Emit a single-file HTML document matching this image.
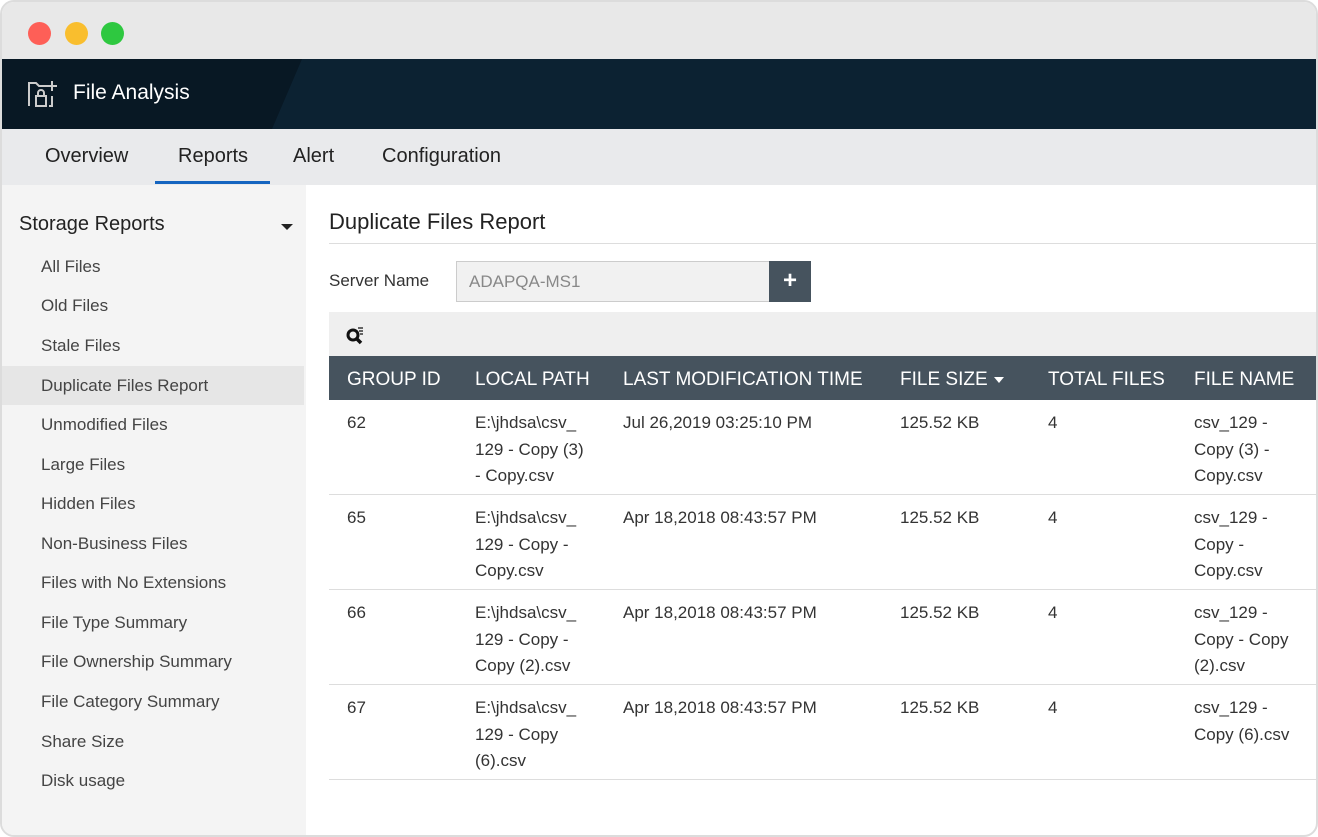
<!DOCTYPE html>
<html><head><style>
*{margin:0;padding:0;box-sizing:border-box}
body{width:1318px;height:837px;background:#fff;font-family:"Liberation Sans",sans-serif;overflow:hidden;position:relative}
.win{position:absolute;left:0;top:0;width:1318px;height:837px;border:2px solid #dcdcdc;border-radius:14px;overflow:hidden;background:#fff}
.tb{position:absolute;left:0;top:0;right:0;height:57px;background:#e8e8e8}
.dot{position:absolute;top:20px;width:23px;height:23px;border-radius:50%}
.hd{position:absolute;left:0;top:57px;right:0;height:70px;background:#0c2232}
.hd .l{position:absolute;left:0;top:0;width:300px;height:70px;background:#081824;clip-path:polygon(0 0,100% 0,270px 100%,0 100%)}
.hd .t{position:absolute;left:71px;top:22px;color:#fff;font-size:21px}
.nav{position:absolute;left:0;top:127px;right:0;height:56px;background:#e9eaec}
.nav span{position:absolute;top:16px;font-size:20px;color:#222}
.side{position:absolute;left:0;top:183px;width:304px;bottom:0;background:#f4f4f4}
.side .h{position:absolute;left:17px;top:28px;font-size:20px;color:#222}
.side .i{position:absolute;left:39px;font-size:17px;color:#444}
.sel{position:absolute;left:0;width:302px;height:39px;background:#e6e6e6}
.c{position:absolute;font-size:17px;color:#333}
.th{position:absolute;top:13px;color:#fff;font-size:19px}
.row{position:absolute;left:327px;right:0;height:95px;border-bottom:1px solid #ddd}
.row div{position:absolute;top:10px;font-size:17px;color:#333;line-height:26.5px}
</style></head><body><div class="win">
<div class="tb"><div class="dot" style="left:26px;background:#fe5f57"></div><div class="dot" style="left:63px;background:#f9be2e"></div><div class="dot" style="left:99px;background:#2ec840"></div></div>
<div class="hd"><div class="l"></div>
<svg style="position:absolute;left:25px;top:20px" width="32" height="30" viewBox="0 0 32 30" fill="none" stroke="#ccc" stroke-width="2"><path d="M2 24V4h7l3 3h8"/><path d="M2 27v-3M22 27h3v-10"/><rect x="9" y="17" width="10" height="10"/><path d="M11 17v-3a3 3 0 0 1 6 0v3"/><path d="M25 2v10M20 7h10"/></svg>
<div class="t">File Analysis</div></div>
<div class="nav"><span style="left:43px">Overview</span><span style="left:176px">Reports</span><span style="left:291px">Alert</span><span style="left:380px">Configuration</span>
<div style="position:absolute;left:153px;top:52px;width:115px;height:3px;background:#1565c0"></div></div>
<div class="side"><div class="h">Storage Reports</div>
<div style="position:absolute;left:279px;top:39px;border:6px solid transparent;border-top:6px solid #222"></div>
<div class="sel" style="top:181px"></div>
<div class="i" style="top:72px">All Files</div><div class="i" style="top:111px">Old Files</div><div class="i" style="top:151px">Stale Files</div><div class="i" style="top:191px">Duplicate Files Report</div><div class="i" style="top:230px">Unmodified Files</div><div class="i" style="top:270px">Large Files</div><div class="i" style="top:309px">Hidden Files</div><div class="i" style="top:349px">Non-Business Files</div><div class="i" style="top:388px">Files with No Extensions</div><div class="i" style="top:428px">File Type Summary</div><div class="i" style="top:467px">File Ownership Summary</div><div class="i" style="top:507px">File Category Summary</div><div class="i" style="top:547px">Share Size</div><div class="i" style="top:586px">Disk usage</div>
</div>
<div class="c" style="left:327px;top:207px;font-size:22px;color:#222">Duplicate Files Report</div>
<div style="position:absolute;left:327px;right:0;top:241px;height:1px;background:#ddd"></div>
<div class="c" style="left:327px;top:269px">Server Name</div>
<div style="position:absolute;left:454px;top:259px;width:315px;height:41px;background:#f1f1f1;border:1px solid #ccc;color:#888;font-size:17px;padding:10px 12px">ADAPQA-MS1</div>
<div style="position:absolute;left:767px;top:259px;width:42px;height:41px;background:#46535e;color:#fff;font-size:24px;font-weight:bold;text-align:center;line-height:40px">+</div>
<div style="position:absolute;left:327px;right:0;top:310px;height:44px;background:#efefef"></div>
<svg style="position:absolute;left:343px;top:324px" width="20" height="20" viewBox="0 0 20 20"><circle cx="8" cy="9" r="5" fill="none" stroke="#111" stroke-width="3"/><path d="M11 12l5 5" stroke="#111" stroke-width="3.5"/><path d="M13 2h5M14 5h4M15 8h3" stroke="#111" stroke-width="1.3"/></svg>
<div style="position:absolute;left:327px;right:0;top:354px;height:44px;background:#46535e">
<div class="th" style="left:18px">GROUP ID</div><div class="th" style="left:146px">LOCAL PATH</div><div class="th" style="left:294px">LAST MODIFICATION TIME</div><div class="th" style="left:571px">FILE SIZE</div>
<div style="position:absolute;left:665px;top:21px;border:5px solid transparent;border-top:6px solid #fff"></div>
<div class="th" style="left:719px">TOTAL FILES</div><div class="th" style="left:865px">FILE NAME</div></div>
<div class="row" style="top:398px"><div style="left:18px">62</div><div style="left:146px">E:\jhdsa\csv_<br>129 - Copy (3)<br>- Copy.csv</div><div style="left:294px">Jul 26,2019 03:25:10 PM</div><div style="left:571px">125.52 KB</div><div style="left:719px">4</div><div style="left:865px">csv_129 -<br>Copy (3) -<br>Copy.csv</div></div>
<div class="row" style="top:493px"><div style="left:18px">65</div><div style="left:146px">E:\jhdsa\csv_<br>129 - Copy -<br>Copy.csv</div><div style="left:294px">Apr 18,2018 08:43:57 PM</div><div style="left:571px">125.52 KB</div><div style="left:719px">4</div><div style="left:865px">csv_129 -<br>Copy -<br>Copy.csv</div></div>
<div class="row" style="top:588px"><div style="left:18px">66</div><div style="left:146px">E:\jhdsa\csv_<br>129 - Copy -<br>Copy (2).csv</div><div style="left:294px">Apr 18,2018 08:43:57 PM</div><div style="left:571px">125.52 KB</div><div style="left:719px">4</div><div style="left:865px">csv_129 -<br>Copy - Copy<br>(2).csv</div></div>
<div class="row" style="top:683px"><div style="left:18px">67</div><div style="left:146px">E:\jhdsa\csv_<br>129 - Copy<br>(6).csv</div><div style="left:294px">Apr 18,2018 08:43:57 PM</div><div style="left:571px">125.52 KB</div><div style="left:719px">4</div><div style="left:865px">csv_129 -<br>Copy (6).csv</div></div>
</div></body></html>
